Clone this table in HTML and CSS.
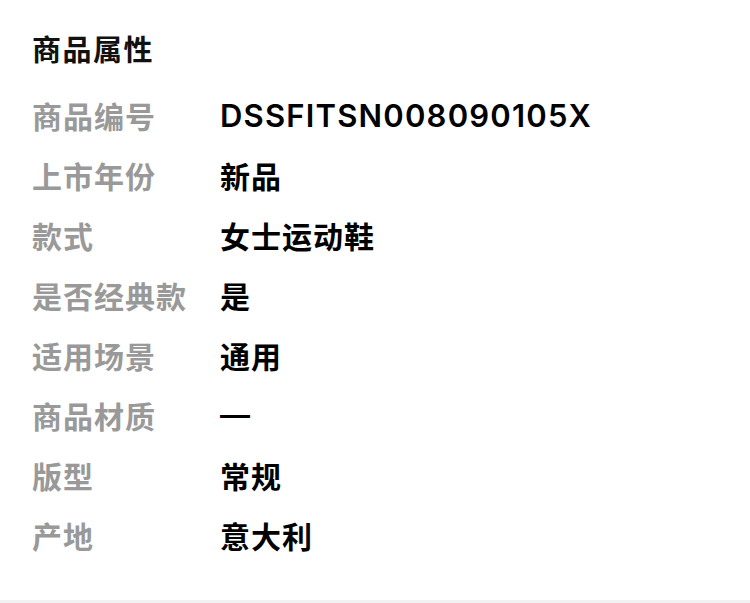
FILE: index.html
```html
<!DOCTYPE html>
<html lang="zh-CN">
  <head>
    <meta charset="UTF-8" />
    <meta name="viewport" content="width=device-width, initial-scale=1.0" />
    <title>商品属性</title>
    <link rel="stylesheet" href="styles.css">
  </head>
  <body>
    <div class="container">
      <h2 class="title">商品属性</h2>
      <div class="attr-list">
        <div class="attr-row">
          <span class="attr-label">商品编号</span>
          <span class="attr-value code">DSSFITSN008090105X</span>
        </div>
        <div class="attr-row">
          <span class="attr-label">上市年份</span>
          <span class="attr-value">新品</span>
        </div>
        <div class="attr-row">
          <span class="attr-label">款式</span>
          <span class="attr-value">女士运动鞋</span>
        </div>
        <div class="attr-row">
          <span class="attr-label">是否经典款</span>
          <span class="attr-value">是</span>
        </div>
        <div class="attr-row">
          <span class="attr-label">适用场景</span>
          <span class="attr-value">通用</span>
        </div>
        <div class="attr-row">
          <span class="attr-label">商品材质</span>
          <span class="attr-value dash">—</span>
        </div>
        <div class="attr-row">
          <span class="attr-label">版型</span>
          <span class="attr-value">常规</span>
        </div>
        <div class="attr-row">
          <span class="attr-label">产地</span>
          <span class="attr-value">意大利</span>
        </div>
      </div>
    </div>
    <div class="footer-bar"></div>
  </body>
</html>
```

FILE: styles.css
```css
body {
  font-family: "Noto Sans CJK SC", "Noto Sans", sans-serif;
  margin: 0;
  padding: 0;
  background-color: #fff;
}
.container {
  height: 600px;
  padding: 0 32px;
  box-sizing: border-box;
}
.title {
  margin: 0;
  padding-top: 28px;
  font-size: 29px;
  line-height: 40px;
  font-weight: bold;
  letter-spacing: 1.5px;
  color: #111;
}
.attr-list {
  padding-top: 17px;
}
.attr-row {
  display: flex;
  align-items: center;
  height: 60px;
}
.attr-label {
  width: 188px;
  flex-shrink: 0;
  font-size: 30px;
  font-weight: bold;
  letter-spacing: 1px;
  color: #999;
}
.attr-value {
  font-size: 30px;
  font-weight: bold;
  letter-spacing: 1px;
  color: #000;
}
.attr-value.code {
  font-family: "Inter", "Noto Sans", sans-serif;
  font-size: 31px;
  font-weight: 600;
  letter-spacing: 1.2px;
}
.attr-value.dash {
  font-family: "Liberation Sans", sans-serif;
  font-weight: bold;
}
.footer-bar {
  height: 3px;
  background-color: #f2f2f2;
}
```
